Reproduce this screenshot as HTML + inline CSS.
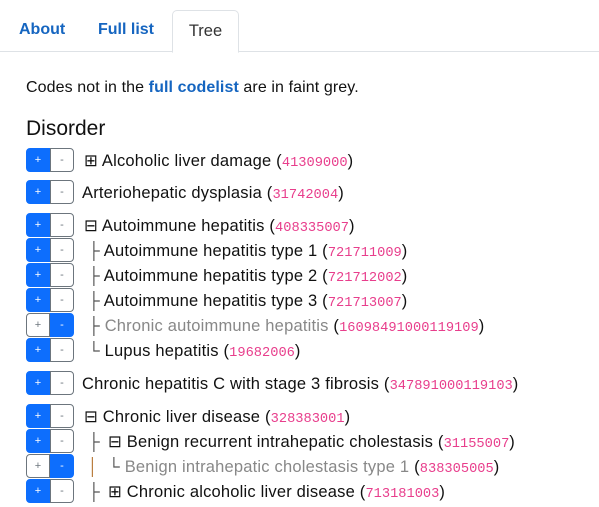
<!DOCTYPE html>
<html><head><meta charset="utf-8"><style>
body{margin:0;width:599px;height:505px;background:#fff;font-family:"Liberation Sans",sans-serif;color:#111;position:relative;overflow:hidden}
.tabs{position:absolute;left:0;top:0;width:599px;height:51px;border-bottom:1px solid #dee2e6}
.tab{position:absolute;top:21px;font-size:16px;font-weight:bold;color:#1565c0}
.tab.active{top:10px;left:172px;width:65px;height:41px;border:1px solid #dee2e6;border-bottom:1px solid #fff;border-radius:5px 5px 0 0;background:#fff;color:#333;font-weight:normal;text-align:center;line-height:40px;font-size:16.5px}
.note{position:absolute;left:26px;top:79px;font-size:16px;letter-spacing:0.1px}
.note b{color:#1565c0;font-weight:bold}
h3{position:absolute;left:26px;top:117px;margin:0;font-size:21px;font-weight:normal}
.row{position:absolute;left:0;height:24px;width:599px;font-size:16.5px;line-height:24px;white-space:nowrap;letter-spacing:0.2px}
.bp,.bm{position:absolute;top:0;width:24px;height:24px;box-sizing:border-box;font-size:11px;text-align:center;line-height:22px;letter-spacing:0}
.bp{left:26px;border-radius:4px 0 0 4px}
.bm{left:50px;border-radius:0 4px 4px 0}
.on{background:#0d6efd;color:#fff;border:1px solid #0d6efd}
.off{background:#fff;color:#6c757d;border:1px solid #6c757d}
.t{position:absolute;top:1px}
.c{font-family:"Liberation Mono",monospace;font-size:13.7px;color:#e83e8c;letter-spacing:0}
.g{color:#888}
.ln{color:#555}
</style></head><body>
<div class="tabs">
<span class="tab" style="left:19px">About</span>
<span class="tab" style="left:98px">Full list</span>
<div class="tab active">Tree</div>
</div>
<div class="note">Codes not in the <b>full codelist</b> are in faint grey.</div>
<h3>Disorder</h3>

<div class="row" style="top:148px"><div class="bp on">+</div><div class="bm off">-</div><span class="t" style="left:84px">⊞ Alcoholic liver damage (<span class="c">41309000</span>)</span></div>
<div class="row" style="top:180px"><div class="bp on">+</div><div class="bm off">-</div><span class="t" style="left:82px">Arteriohepatic dysplasia (<span class="c">31742004</span>)</span></div>

<div class="row" style="top:213px"><div class="bp on">+</div><div class="bm off">-</div><span class="t" style="left:84px">⊟ Autoimmune hepatitis (<span class="c">408335007</span>)</span></div>
<div class="row" style="top:238px"><div class="bp on">+</div><div class="bm off">-</div><span class="t" style="left:88px"><span class="ln">├</span> Autoimmune hepatitis type 1 (<span class="c">721711009</span>)</span></div>
<div class="row" style="top:263px"><div class="bp on">+</div><div class="bm off">-</div><span class="t" style="left:88px"><span class="ln">├</span> Autoimmune hepatitis type 2 (<span class="c">721712002</span>)</span></div>
<div class="row" style="top:288px"><div class="bp on">+</div><div class="bm off">-</div><span class="t" style="left:88px"><span class="ln">├</span> Autoimmune hepatitis type 3 (<span class="c">721713007</span>)</span></div>
<div class="row" style="top:313px"><div class="bp off">+</div><div class="bm on">-</div><span class="t" style="left:88px"><span class="ln">├</span> <span class="g">Chronic autoimmune hepatitis</span> (<span class="c">16098491000119109</span>)</span></div>
<div class="row" style="top:338px"><div class="bp on">+</div><div class="bm off">-</div><span class="t" style="left:88px"><span class="ln">└</span> Lupus hepatitis (<span class="c">19682006</span>)</span></div>

<div class="row" style="top:371px"><div class="bp on">+</div><div class="bm off">-</div><span class="t" style="left:82px">Chronic hepatitis C with stage 3 fibrosis (<span class="c">347891000119103</span>)</span></div>

<div class="row" style="top:404px"><div class="bp on">+</div><div class="bm off">-</div><span class="t" style="left:84px">⊟ Chronic liver disease (<span class="c">328383001</span>)</span></div>
<div class="row" style="top:429px"><div class="bp on">+</div><div class="bm off">-</div><span class="t" style="left:88px"><span class="ln">├</span><span style="position:absolute;left:20px">⊟ Benign recurrent intrahepatic cholestasis (<span class="c">31155007</span>)</span></span></div>
<div class="row" style="top:454px"><div class="bp off">+</div><div class="bm on">-</div><span class="t" style="left:88px"><span class="ln" style="color:#b87a3a">│</span><span style="position:absolute;left:20px"><span class="ln">└</span> <span class="g">Benign intrahepatic cholestasis type 1</span> (<span class="c">838305005</span>)</span></span></div>
<div class="row" style="top:479px"><div class="bp on">+</div><div class="bm off">-</div><span class="t" style="left:88px"><span class="ln">├</span><span style="position:absolute;left:20px">⊞ Chronic alcoholic liver disease (<span class="c">713181003</span>)</span></span></div>
</body></html>
